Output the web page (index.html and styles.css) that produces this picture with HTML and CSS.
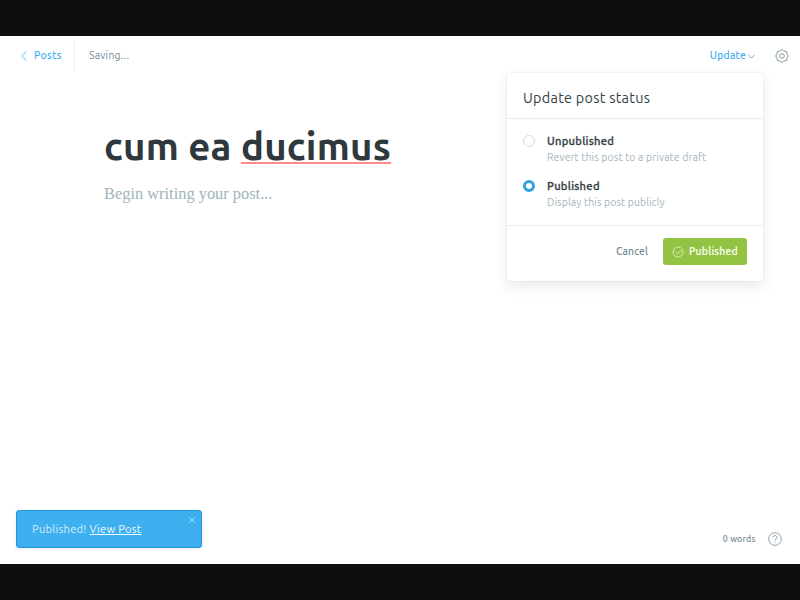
FILE: index.html
```html
<!DOCTYPE html>
<html lang="en">
<head>
<meta charset="utf-8">
<title>Editor</title>
<link rel="stylesheet" href="styles.css">
</head>
<body>
<main class="editor">
  <header class="topbar">
    <a class="back">
      <svg class="chevron-left" viewBox="0 0 6 10"><path d="M5.500 .5 .7 5l4.800 4.500"/></svg>
      <span class="back-label">Posts</span>
    </a>
    <span class="saving">Saving...</span>
    <a class="update"><span class="update-label">Update</span>
      <svg class="chevron-down" viewBox="0 0 7 5"><path d="M.5 .8 3.500 4.200 6.500 .8"/></svg>
    </a>
    <svg class="gear" viewBox="0 0 14 14"><path d="M5.700 1.500Q7-.3 8.300 1.500 8.700 2.600 9.900 2.100 12.100 1.900 11.900 4.100 11.400 5.300 12.500 5.700 14.300 7 12.500 8.300 11.400 8.700 11.900 9.900 12.100 12.100 9.900 11.900 8.700 11.400 8.300 12.500 7 14.300 5.700 12.500 5.300 11.400 4.100 11.900 1.900 12.100 2.100 9.900 2.600 8.700 1.500 8.300-.3 7 1.500 5.700 2.600 5.300 2.100 4.100 1.900 1.900 4.100 2.100 5.300 2.600 5.700 1.500z"/><circle cx="7" cy="7" r="2.300"/></svg>
  </header>
  <section class="content">
    <h1 class="title">cum ea <span class="misspelled">ducimus</span></h1>
    <p class="placeholder">Begin writing your post...</p>
  </section>
  <footer class="statusbar">
    <div class="toast">
      <span class="toast-text">Published! <a class="toast-link">View Post</a></span>
      <svg class="close" viewBox="0 0 6 6"><path d="M.5.5l5 5M5.500.5l-5 5"/></svg>
    </div>
    <span class="words">0 words</span>
    <svg class="help" viewBox="0 0 14 14"><circle cx="7" cy="7" r="6.300"/><path d="M5 5.500C5 2.900 9 3 9 5.400 9 7 7 6.800 7 8.500M7 9.700v1"/></svg>
  </footer>
  <aside class="popup">
    <h2 class="popup-title"><span>Update post status</span></h2>
    <div class="options">
      <div class="option">
        <i class="radio"></i>
        <div><div class="name unpublished">Unpublished</div><div class="hint hint-draft">Revert this post to a private draft</div></div>
      </div>
      <div class="option">
        <i class="radio selected"></i>
        <div><div class="name published">Published</div><div class="hint hint-public">Display this post publicly</div></div>
      </div>
    </div>
    <div class="actions">
      <span class="cancel">Cancel</span>
      <button class="confirm"><svg class="check" viewBox="0 0 12 12"><path d="M10.700 4.200A5 5 0 1 1 9 2"/><path d="M3.500 5.800l2.200 2.100 5-5.400"/></svg><span>Published</span></button>
    </div>
  </aside>
</main>
</body>
</html>
```
FILE: styles.css
```css
* { box-sizing: border-box; }
body {
  margin: 0;
  height: 600px;
  padding: 36px 0;
  overflow: hidden;
  background: #0e0e0e;
  font-family: Ubuntu, "Noto Sans", sans-serif;
}
svg { fill: none; stroke: #738a94; stroke-width: .8; flex: none; }
h1, h2, p { margin: 0; }
.editor {
  position: relative;
  display: flex;
  flex-direction: column;
  height: 528px;
  background: #fff;
}
.topbar {
  display: flex;
  align-items: center;
  height: 39px;
  padding: 0 12px 0 21px;
  font-size: 10.400px;
  letter-spacing: .25px;
  white-space: nowrap;
}
.back-label, .saving, .update-label { line-height: 14px; padding-bottom: 1px; }
.back {
  display: flex;
  align-items: center;
  width: 54px;
  height: 28px;
  gap: 7px;
  border-right: 1px solid #e5eff5;
  color: #3eb0ef;
  font-weight: 500;
  letter-spacing: .35px;
}
.chevron-left { width: 6px; height: 10px; stroke: #3eb0ef; }
.saving { margin-left: 14px; color: #738a94; }
.update {
  display: flex;
  align-items: center;
  gap: 2px;
  margin-left: auto;
  margin-right: 20px;
  color: #3eb0ef;
  font-weight: 500;
  letter-spacing: .2px;
}
.chevron-down { width: 7px; height: 5px; margin-top: 1px; stroke: #738a94; }
.gear { width: 14px; height: 14px; margin-right: -1px; stroke-width: .9; }
.content { flex: 1; padding: 43px 104px 0; }
.title {
  height: 56px;
  font-size: 38.400px;
  line-height: 56px;
  font-weight: 700;
  letter-spacing: .2px;
  color: #2e383d;
  white-space: nowrap;
}
.misspelled {
  text-decoration: underline #ff8a8d 1.500px;
  text-decoration-skip-ink: none;
  text-underline-offset: 2px;
}
.placeholder {
  margin-top: 9px;
  font: 16.400px/22px "Liberation Serif", serif;
  color: #a1b3bd;
}
.statusbar { display: flex; align-items: flex-end; height: 54px; padding: 0 19px 16px 16px; }
.toast {
  display: flex;
  align-items: flex-start;
  justify-content: space-between;
  width: 186px;
  height: 38px;
  padding: 6px 6px 0 15px;
  border: 1px solid #2196de;
  border-radius: 3px;
  background: #3eb0ef;
  box-shadow: 0 1px 4px rgba(0,0,0,.08);
  color: #d1ecfb;
  font-size: 11.200px;
  letter-spacing: .23px;
  line-height: 24px;
}
.toast-link { color: #f2faff; text-decoration: underline; text-underline-offset: 1px; }
.close { width: 6px; height: 6px; stroke: #c4e6fa; stroke-width: .8; }
.words { margin-left: auto; margin-right: 12px; font-size: 8.800px; font-weight: 500; letter-spacing: .15px; line-height: 18px; color: #738a94; }
.help { width: 14px; height: 14px; margin-right: -.5px; margin-bottom: 2.500px; }
.popup {
  position: absolute;
  top: 37px;
  left: 507px;
  width: 256px;
  height: 208px;
  border-radius: 3px;
  background: #fff;
  box-shadow: 0 0 0 1px rgba(99,114,130,.05), 0 5px 14px rgba(27,39,51,.1);
  white-space: nowrap;
}
.popup-title {
  height: 46px;
  padding-left: 16px;
  border-bottom: 1px solid #e5eff1;
  font-size: 14.400px;
  font-weight: 400;
  letter-spacing: .27px;
  line-height: 50px;
  color: #343f44;
}
.options { display: flex; flex-direction: column; gap: 13px; height: 107px; padding: 14px 16px 0; border-bottom: 1px solid #e5eff5; }
.option { display: flex; gap: 12px; height: 32px; }
.radio { width: 12px; height: 12px; margin-top: 2px; border: 1px solid #c9dceb; border-radius: 50%; }
.selected { border: 3.500px solid #30a2e3; }
.name { height: 17px; font-size: 11.200px; font-weight: 500; letter-spacing: .27px; line-height: 17px; color: #343f44; -webkit-text-stroke: .3px #343f44; }
.hint { font-size: 10.400px; letter-spacing: .13px; line-height: 15px; color: #a3b4bc; }
.actions { display: flex; align-items: flex-start; justify-content: flex-end; gap: 15px; height: 51px; padding: 12px 16px 0 0; font-size: 10.400px; letter-spacing: .07px; }
.cancel { line-height: 27px; color: #738a94; font-weight: 500; }
.confirm {
  display: flex;
  align-items: center;
  gap: 5px;
  width: 84px;
  height: 27px;
  padding: 0 0 0 9px;
  border: 0;
  border-radius: 3px;
  background: #92c342;
  color: #f7ffec;
  font: 500 10.400px/14px Ubuntu, "Noto Sans", sans-serif;
  letter-spacing: .25px;
  -webkit-text-stroke: .2px #f7ffec;
}
.confirm span { height: 14px; margin-top: -1px; }
.check { width: 12px; height: 12px; margin-top: 1px; stroke: #edf8db; }
```
